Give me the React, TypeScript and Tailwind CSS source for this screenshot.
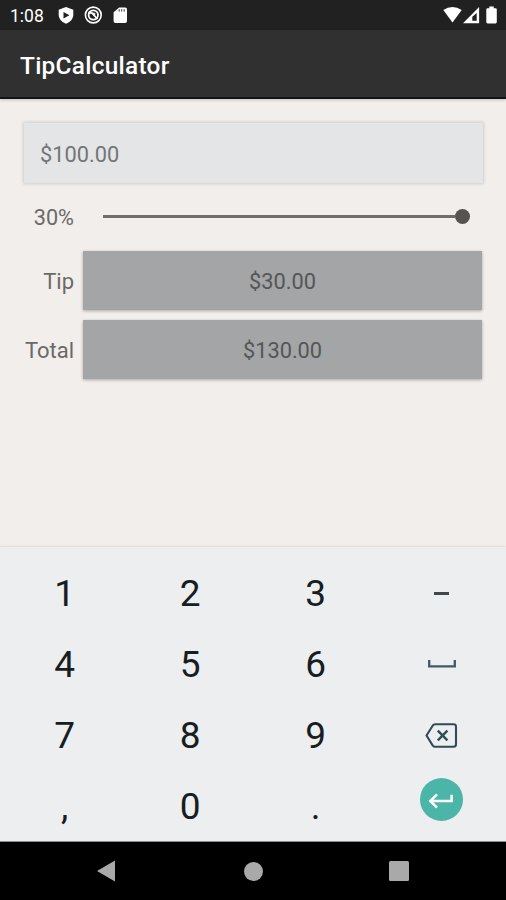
import React from "react";

function StatusBar() {
  return (
    <header className="flex h-[30px] shrink-0 items-center justify-between bg-[#212121] pl-[10px] pr-[7px] text-white">
      <div className="flex items-center">
        <span className="w-[47px] pt-[2px] text-[17.5px] leading-[20px]">1:08</span>
        <svg width="18" height="20" viewBox="0 0 18 20" className="shrink-0">
          <path d="M9 2 L16.3 4.7 V9.5 C16.3 14 13.2 17.2 9 18.7 C4.8 17.2 1.7 14 1.7 9.5 V4.7 Z" fill="#fff" />
          <path d="M6.5 7 L12.4 10.2 L6.5 13.4 Z" fill="#212121" />
        </svg>
        <svg width="20" height="20" viewBox="0 0 20 20" className="ml-[8px] shrink-0" fill="none" stroke="#fff">
          <circle cx="10.3" cy="10" r="7.9" strokeWidth="1.6" />
          <circle cx="10.3" cy="10" r="4.7" strokeWidth="1.8" />
          <path d="M5.5 7.5 L9 8 L14.5 14" strokeWidth="1.8" />
          <circle cx="11" cy="9" r="1" fill="#fff" strokeWidth="1" />
        </svg>
        <svg width="16" height="20" viewBox="0 0 16 20" className="ml-[10px] shrink-0">
          <path d="M6.2 2.5 H12.2 Q14 2.5 14 4.2 V16 Q14 17.9 12.2 17.9 H2.4 Q0.6 17.9 0.6 16 V7.3 Z" fill="#fff" />
          <path d="M6.2 4.2 V6.6 M8.7 4.2 V6.6 M11.2 4.2 V6.6" stroke="#212121" strokeWidth="0.9" />
        </svg>
      </div>
      <svg width="58" height="20" viewBox="0 0 58 20" className="shrink-0">
        <path d="M2.3 5.1 Q11.5 -1.2 20.7 5.1 L11.5 17.6 Z" fill="#fff" />
        <path d="M38.1 2 V18.2 H22 Z" fill="#fff" />
        <path d="M35.7 8 V15.8 H31.3 V11.8 Z" fill="#212121" />
        <path d="M48.3 1.5 H52.7 V3.3 H54.5 Q55.8 3.3 55.8 4.6 V17 Q55.8 18.4 54.5 18.4 H46.6 Q45.3 18.4 45.3 17 V4.6 Q45.3 3.3 46.6 3.3 H48.3 Z" fill="#fff" />
      </svg>
    </header>
  );
}

function ResultRow({ label, value }: { label: string; value: string }) {
  return (
    <div className="flex h-[59px] items-center">
      <span className="w-[74px] pt-[2px] text-right text-[22px] leading-[26px] text-[#6b6967]">{label}</span>
      <div className="ml-[9px] flex h-full w-[399px] items-center justify-center bg-[#a3a5a6] pt-[2px] text-[21.8px] leading-[26px] text-[#555657] shadow-[0_1px_3px_rgba(0,0,0,0.3)]">
        {value}
      </div>
    </div>
  );
}

function SpaceIcon() {
  return (
    <svg width="30" height="12" viewBox="0 0 30 12" fill="none" stroke="#3d5a66" strokeWidth="2.3" className="ml-px">
      <path d="M2.2 1 V7.3 H27.8 V1" />
    </svg>
  );
}

function BackspaceIcon() {
  return (
    <svg width="34" height="28" viewBox="0 0 34 28" fill="none" stroke="#304c58" strokeWidth="2.1">
      <path d="M11 2.3 H29.5 Q32 2.3 32 4.7 V22.3 Q32 24.8 29.5 24.8 H11 Q9.7 24.8 8.8 23.6 L2.5 13.5 L8.8 3.5 Q9.7 2.3 11 2.3 Z" strokeLinejoin="round" />
      <path d="M13.8 8.7 L23.4 18.3 M23.4 8.7 L13.8 18.3" strokeWidth="2.4" />
    </svg>
  );
}

function EnterKey() {
  return (
    <span className="-mt-[15px] flex h-[43px] w-[43px] items-center justify-center rounded-full bg-[#4bb5a8]">
      <svg width="43" height="43" viewBox="0 0 43 43" fill="none" stroke="#fff" strokeWidth="2.5">
        <path d="M31.6 16.8 V23 H10.5 M17 16.3 L10.3 23 L17 29.7" />
      </svg>
    </span>
  );
}

const keys: React.ReactNode[] = [
  "1", "2", "3", <span className="h-[3px] w-[15px] bg-[#41474a]" />,
  "4", "5", "6", <SpaceIcon />,
  "7", "8", "9", <BackspaceIcon />,
  ",", "0", ".", <EnterKey />,
];

export default function App() {
  return (
    <div className="flex h-[900px] w-[506px] flex-col overflow-hidden bg-[#f2eeeb] font-['Roboto',sans-serif]">
      <StatusBar />
      <div className="z-10 flex h-[69px] shrink-0 items-center border-b-2 border-[#141414] bg-[#303030] pl-[20px] pt-[6px] text-[24.4px] font-medium tracking-[0.27px] text-white shadow-[0_1px_3px_rgba(0,0,0,0.2)]">
        TipCalculator
      </div>
      <main className="flex h-[448px] shrink-0 flex-col pt-[24px]">
        <div className="ml-[24px] flex h-[60px] w-[459px] items-center bg-[#e3e5e6] pl-[16px] pt-[4px] text-[21.8px] text-[#747576] shadow-[0_0_3px_1px_rgba(0,0,0,0.14)]">
          $100.00
        </div>
        <div className="flex h-[68px] items-center">
          <span className="w-[74px] pt-[2px] text-right text-[21.7px] text-[#6b6967]">30%</span>
          <div className="ml-[29px] mb-px flex w-[367px] items-center">
            <div className="h-[2.5px] grow bg-[#706e6d]" />
            <div className="h-[15px] w-[15px] rounded-full bg-[#555453]" />
          </div>
        </div>
        <div className="flex flex-col gap-[10px]">
          <ResultRow label="Tip" value="$30.00" />
          <ResultRow label="Total" value="$130.00" />
        </div>
      </main>
      <section className="grid h-[295px] shrink-0 grid-cols-4 grid-rows-[repeat(4,71px)] border-b border-[#8c8e8f] bg-[#eceef0] px-[2px] pt-[11px] shadow-[0_-1px_2px_rgba(0,0,0,0.08)]">
        {keys.map((key, i) => (
          <div key={i} className="flex items-center justify-center text-[37px] leading-none text-[#171d20]">
            {key}
          </div>
        ))}
      </section>
      <nav className="flex h-[58px] shrink-0 items-center bg-black">
        <svg width="20" height="22" viewBox="0 0 20 22" className="ml-[96px]">
          <path d="M1 11 L19 0.5 V21.5 Z" fill="#a9a9a9" />
        </svg>
        <div className="ml-[128px] h-[19px] w-[19px] rounded-full bg-[#a9a9a9]" />
        <div className="ml-[126px] h-[20px] w-[20px] rounded-[1.5px] bg-[#a9a9a9]" />
      </nav>
    </div>
  );
}
